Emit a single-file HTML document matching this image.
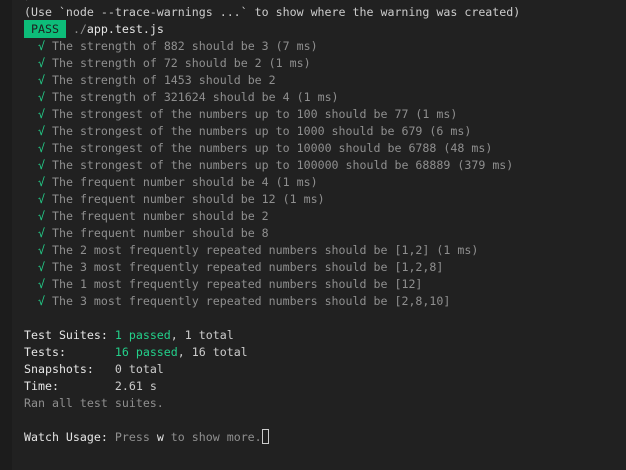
<!DOCTYPE html>
<html><head><meta charset="utf-8"><style>
html,body{margin:0;padding:0;}
body{width:626px;height:470px;overflow:hidden;background:#212121;position:relative;}
.strip{position:absolute;left:0;top:0;width:12px;height:470px;background:#1c1c1c;}
pre{position:absolute;left:24px;top:-13.5px;margin:0;font-family:"DejaVu Sans Mono","Liberation Mono",monospace;font-size:11.62px;line-height:17px;color:#cccccc;}
.g{color:#8f8f8f}.c{color:#23d18b}.w{color:#e5e5e5}
.pass{background:#0dbc79;color:#1e1e1e;padding:2px 0}
.cur{display:inline-block;width:7px;height:15px;border:1px solid #ccc;box-sizing:border-box;vertical-align:-3px}
</style></head><body><div class="strip"></div><pre><span class="g">)</span>
(Use `node --trace-warnings ...` to show where the warning was created)
<span class="pass"> PASS </span> <span class="g">./</span><span class="w">app.test.js</span>
  <span class="c">√</span> <span class="g">The strength of 882 should be 3 (7 ms)</span>
  <span class="c">√</span> <span class="g">The strength of 72 should be 2 (1 ms)</span>
  <span class="c">√</span> <span class="g">The strength of 1453 should be 2</span>
  <span class="c">√</span> <span class="g">The strength of 321624 should be 4 (1 ms)</span>
  <span class="c">√</span> <span class="g">The strongest of the numbers up to 100 should be 77 (1 ms)</span>
  <span class="c">√</span> <span class="g">The strongest of the numbers up to 1000 should be 679 (6 ms)</span>
  <span class="c">√</span> <span class="g">The strongest of the numbers up to 10000 should be 6788 (48 ms)</span>
  <span class="c">√</span> <span class="g">The strongest of the numbers up to 100000 should be 68889 (379 ms)</span>
  <span class="c">√</span> <span class="g">The frequent number should be 4 (1 ms)</span>
  <span class="c">√</span> <span class="g">The frequent number should be 12 (1 ms)</span>
  <span class="c">√</span> <span class="g">The frequent number should be 2</span>
  <span class="c">√</span> <span class="g">The frequent number should be 8</span>
  <span class="c">√</span> <span class="g">The 2 most frequently repeated numbers should be [1,2] (1 ms)</span>
  <span class="c">√</span> <span class="g">The 3 most frequently repeated numbers should be [1,2,8]</span>
  <span class="c">√</span> <span class="g">The 1 most frequently repeated numbers should be [12]</span>
  <span class="c">√</span> <span class="g">The 3 most frequently repeated numbers should be [2,8,10]</span>

<span class="w">Test Suites:</span> <span class="c">1 passed</span>, 1 total
<span class="w">Tests:</span>       <span class="c">16 passed</span>, 16 total
<span class="w">Snapshots:</span>   0 total
<span class="w">Time:</span>        2.61 s
<span class="g">Ran all test suites.</span>

<span class="w">Watch Usage:</span> <span class="g">Press </span><span class="w">w</span><span class="g"> to show more.</span><span class="cur"></span></pre></body></html>
